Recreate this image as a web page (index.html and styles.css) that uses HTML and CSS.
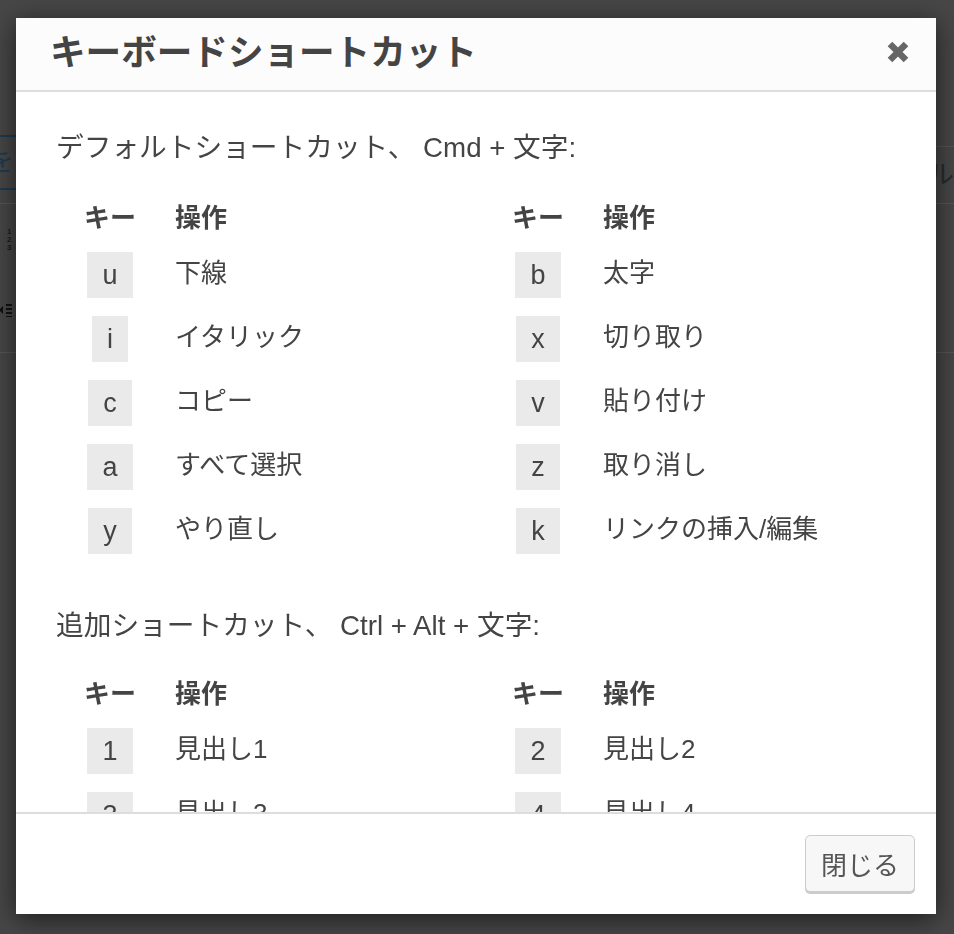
FILE: index.html
```html
<!DOCTYPE html>
<html lang="ja">
<head>
<meta charset="utf-8">
<title>キーボードショートカット</title>
<link rel="stylesheet" href="styles.css">
</head>
<body>
<div class="page">
  <div class="page-row">
    <div class="tab-left"><span>をを</span></div>
    <div class="tab-right"><span>ルル</span></div>
  </div>
  <div class="editor-toolbar">
    <div class="ol-icon"><span>1</span><span>2</span><span>3</span></div>
    <svg class="outdent-icon" width="16" height="16" viewBox="0 0 16 16"><path d="M8 2v2h6V2zM8 6v2h6V6zM8 10v2h6v-2zM8 14v1h6v-1z" fill="#111"/><path d="M1 8l4-4v8z" fill="#111"/></svg>
  </div>
</div>

<div class="modal" role="dialog" aria-labelledby="modal-title">
  <header class="modal-header">
    <h1 id="modal-title" class="modal-title">キーボードショートカット</h1>
    <button class="close-btn" aria-label="閉じる">
      <svg width="22" height="22" viewBox="0 0 22 22"><path d="M3 3L19 19M19 3L3 19" stroke="#666" stroke-width="6.5"/></svg>
    </button>
  </header>
  <div class="modal-body">
    <section class="section">
      <h2 class="section-title">デフォルトショートカット、 Cmd + 文字:</h2>
      <div class="tables">
        <div class="shortcut-table">
          <div class="th">キー</div><div class="th th-action">操作</div>
          <div class="key"><kbd>u</kbd></div><div class="action">下線</div>
          <div class="key"><kbd>i</kbd></div><div class="action">イタリック</div>
          <div class="key"><kbd>c</kbd></div><div class="action">コピー</div>
          <div class="key"><kbd>a</kbd></div><div class="action">すべて選択</div>
          <div class="key"><kbd>y</kbd></div><div class="action">やり直し</div>
        </div>
        <div class="shortcut-table">
          <div class="th">キー</div><div class="th th-action">操作</div>
          <div class="key"><kbd>b</kbd></div><div class="action">太字</div>
          <div class="key"><kbd>x</kbd></div><div class="action">切り取り</div>
          <div class="key"><kbd>v</kbd></div><div class="action">貼り付け</div>
          <div class="key"><kbd>z</kbd></div><div class="action">取り消し</div>
          <div class="key"><kbd>k</kbd></div><div class="action">リンクの挿入/編集</div>
        </div>
      </div>
    </section>
    <section class="section">
      <h2 class="section-title">追加ショートカット、 Ctrl + Alt + 文字:</h2>
      <div class="tables">
        <div class="shortcut-table">
          <div class="th">キー</div><div class="th th-action">操作</div>
          <div class="key"><kbd>1</kbd></div><div class="action">見出し1</div>
          <div class="key"><kbd>3</kbd></div><div class="action">見出し3</div>
          <div class="key"><kbd>5</kbd></div><div class="action">見出し5</div>
        </div>
        <div class="shortcut-table">
          <div class="th">キー</div><div class="th th-action">操作</div>
          <div class="key"><kbd>2</kbd></div><div class="action">見出し2</div>
          <div class="key"><kbd>4</kbd></div><div class="action">見出し4</div>
          <div class="key"><kbd>6</kbd></div><div class="action">見出し6</div>
        </div>
      </div>
    </section>
  </div>
  <footer class="modal-footer">
    <button class="btn">閉じる</button>
  </footer>
</div>
</body>
</html>
```

FILE: styles.css
```css
* { box-sizing: border-box; }

html, body {
  margin: 0;
  padding: 0;
}

body {
  background: #474747;
  font-family: "Liberation Sans", "Noto Sans CJK JP", sans-serif;
  color: #444;
  width: 954px;
  height: 934px;
  overflow: hidden;
}

/* ---- dimmed page behind the dialog ---- */
.page {
  padding-top: 135px;
}

.page-row {
  display: flex;
  justify-content: space-between;
  height: 68px;
}

.tab-left {
  width: 60px;
  height: 55px;
  border-top: 2px solid #1e3a50;
  border-bottom: 2px solid #1e3a50;
  color: #1d3b52;
  font-size: 26px;
  line-height: 51px;
  overflow: hidden;
  white-space: nowrap;
  text-indent: -12px;
}

.tab-right {
  width: 60px;
  height: 55px;
  margin-top: 11px;
  border-top: 1px solid #555;
  color: #2a2a2a;
  font-size: 26px;
  line-height: 56px;
  overflow: hidden;
  white-space: nowrap;
  text-indent: -10px;
  text-align: right;
}

.editor-toolbar {
  height: 150px;
  border-top: 1px solid #575757;
  border-bottom: 1px solid #575757;
  padding: 24px 0 0 7px;
}

.ol-icon {
  display: flex;
  flex-direction: column;
  font-size: 8px;
  line-height: 8px;
  font-weight: bold;
  color: #1a1a1a;
  width: 8px;
}

.outdent-icon {
  display: block;
  margin-top: 50px;
  margin-left: -9px;
}

/* ---- dialog ---- */
.modal {
  position: fixed;
  left: 16px;
  top: 18px;
  width: 920px;
  height: 896px;
  background: #fff;
  box-shadow: 0 5px 25px rgba(0, 0, 0, 0.6);
  display: flex;
  flex-direction: column;
}

.modal-header {
  height: 74px;
  flex: none;
  background: #fcfcfc;
  border-bottom: 2px solid #ddd;
  display: flex;
  align-items: center;
  justify-content: space-between;
  padding: 0 27px 0 34px;
}

.modal-title {
  margin: 0;
  font-size: 35.6px;
  font-weight: bold;
  color: #444;
  line-height: 1;
}

.close-btn {
  background: none;
  border: 0;
  padding: 0;
  width: 22px;
  height: 22px;
  display: flex;
  margin-bottom: 4px;
}

.modal-body {
  flex: 1;
  overflow: hidden;
  padding: 36px 40px 0 40px;
}

.section-title {
  margin: 0 0 29px;
  font-size: 27.7px;
  font-weight: normal;
  line-height: 40px;
  color: #444;
  white-space: nowrap;
}

.section + .section .section-title {
  padding-top: 2px;
  margin-bottom: 27px;
}

.tables {
  display: grid;
  grid-template-columns: 428px 1fr;
  margin-left: 28px;
  margin-bottom: 43px;
}

.shortcut-table {
  display: grid;
  grid-template-columns: 52px 1fr;
  grid-template-rows: 44px;
  grid-auto-rows: 64px;
  column-gap: 39px;
}

.th {
  height: 42px;
  align-self: start;
  font-size: 26px;
  font-weight: bold;
  line-height: 42px;
  text-align: center;
  color: #444;
  white-space: nowrap;
}

.th-action {
  text-align: left;
}

.key {
  display: flex;
  justify-content: center;
  align-items: center;
  padding-top: 4px;
}

.key kbd {
  display: inline-block;
  font-family: "Liberation Sans", "Noto Sans CJK JP", sans-serif;
  font-size: 27px;
  line-height: 46px;
  height: 46px;
  padding: 0 15px;
  background: #eaeaea;
  color: #444;
}

.action {
  display: flex;
  align-items: center;
  padding-bottom: 5px;
  font-size: 26px;
  color: #444;
  white-space: nowrap;
}

.modal-footer {
  flex: none;
  height: 102px;
  border-top: 2px solid #ddd;
  display: flex;
  justify-content: flex-end;
  align-items: flex-start;
  padding: 21px 21px 0 0;
}

.btn {
  width: 110px;
  height: 57px;
  background: #f7f7f7;
  border: 1px solid #ccc;
  border-radius: 5px;
  box-shadow: 0 2px 0 #ccc;
  font-family: "Liberation Sans", "Noto Sans CJK JP", sans-serif;
  font-size: 26px;
  color: #555;
  padding: 0;
}
```
